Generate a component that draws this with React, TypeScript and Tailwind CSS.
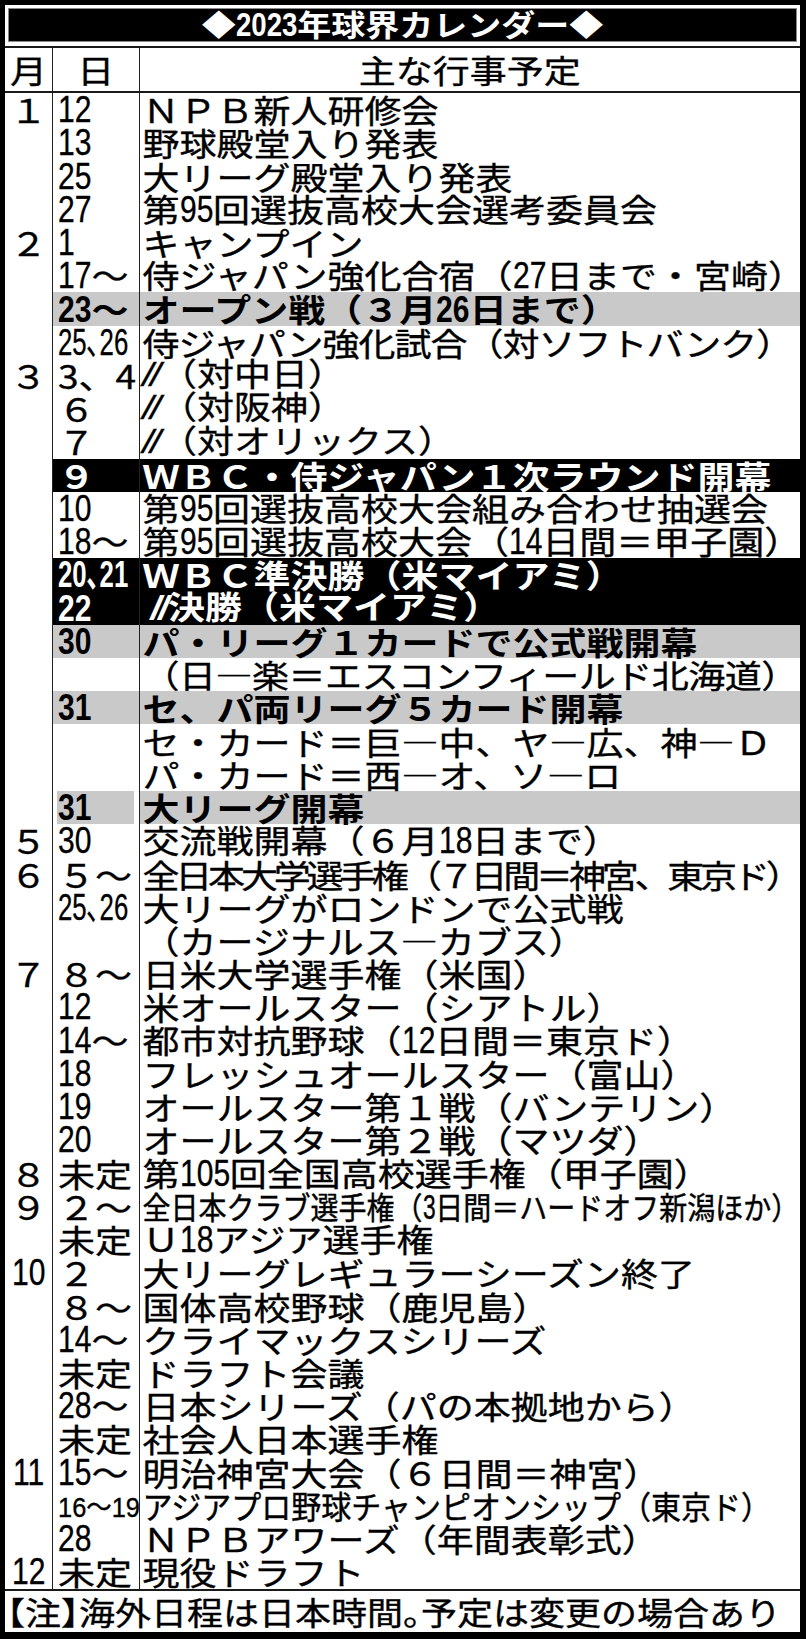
import React from "react";

const MR: Record<number, string> = {
  1: "mr-[-0.167em]",
  2: "mr-[-0.334em]",
  3: "mr-[-0.5em]",
  4: "mr-[-0.667em]",
};

function F({ s }: { s: string }) {
  const parts = s.split(/(\d+)/);
  return (
    <>
      {parts.map((p, i) =>
        /^\d+$/.test(p) ? (
          <span
            key={i}
            className={
              "inline-block font-['Liberation_Sans'] text-[1.16em] leading-none origin-left [transform:scaleX(0.7)] " +
              MR[p.length]
            }
          >
            {p}
          </span>
        ) : p ? (
          <span key={i}>{p}</span>
        ) : null
      )}
    </>
  );
}

const Ditto = () => (
  <span className="inline-block font-['Liberation_Sans'] italic tracking-[-3px] mr-[2px] text-[1.05em] leading-none">//</span>
);

type Row = {
  m?: React.ReactNode;
  d?: React.ReactNode;
  c: React.ReactNode;
  bg?: "gray" | "black";
  inset?: boolean;
  cc?: string;
};

const smallPair = (s: string) => (
  <span className="inline-block font-['Liberation_Sans','Noto_Sans_CJK_JP'] text-[43px] leading-none origin-left [transform:scaleX(0.6)]">
    {s}
  </span>
);

const rows: Row[] = [
  { m: "１", d: <F s="12" />, c: "ＮＰＢ新人研修会" },
  { d: <F s="13" />, c: "野球殿堂入り発表" },
  { d: <F s="25" />, c: "大リーグ殿堂入り発表" },
  { d: <F s="27" />, c: <F s="第95回選抜高校大会選考委員会" /> },
  { m: "２", d: <F s="1" />, c: "キャンプイン" },
  { d: <F s="17～" />, c: <F s="侍ジャパン強化合宿（27日まで・宮崎）" /> },
  { d: <F s="23～" />, c: <F s="オープン戦（３月26日まで）" />, bg: "gray" },
  { d: smallPair("25､26"), c: "侍ジャパン強化試合（対ソフトバンク）", cc: "tracking-[-1px] [transform:scaleY(0.87)]" },
  { m: "３", d: "3、4", c: <><Ditto />（対中日）</> },
  { d: "６", c: <><Ditto />（対阪神）</> },
  { d: "７", c: <><Ditto />（対オリックス）</> },
  { d: "９", c: "ＷＢＣ・侍ジャパン１次ラウンド開幕", bg: "black" },
  { d: <F s="10" />, c: <F s="第95回選抜高校大会組み合わせ抽選会" /> },
  { d: <F s="18～" />, c: <F s="第95回選抜高校大会（14日間＝甲子園）" /> },
  { d: smallPair("20､21"), c: "ＷＢＣ準決勝（米マイアミ）", bg: "black" },
  { d: <F s="22" />, c: <><span className="inline-block w-[8px]" /><Ditto />決勝（米マイアミ）</>, bg: "black" },
  { d: <F s="30" />, c: "パ・リーグ１カードで公式戦開幕", bg: "gray" },
  { c: "（日―楽＝エスコンフィールド北海道）", cc: "tracking-[-0.5px] [transform:scaleY(0.87)]" },
  { d: <F s="31" />, c: "セ、パ両リーグ５カード開幕", bg: "gray" },
  { c: "セ・カード＝巨―中、ヤ―広、神―Ｄ" },
  { c: "パ・カード＝西―オ、ソ―ロ" },
  { d: <F s="31" />, c: "大リーグ開幕", bg: "gray", inset: true },
  { m: "５", d: <F s="30" />, c: <F s="交流戦開幕（６月18日まで）" /> },
  { m: "６", d: "５～", c: "全日本大学選手権（７日間＝神宮、東京ド）", cc: "tracking-[-4.2px] [transform:scaleY(0.87)]" },
  { d: smallPair("25､26"), c: "大リーグがロンドンで公式戦" },
  { c: "（カージナルス―カブス）" },
  { m: "７", d: "８～", c: "日米大学選手権（米国）" },
  { d: <F s="12" />, c: "米オールスター（シアトル）" },
  { d: <F s="14～" />, c: <F s="都市対抗野球（12日間＝東京ド）" /> },
  { d: <F s="18" />, c: "フレッシュオールスター（富山）" },
  { d: <F s="19" />, c: "オールスター第１戦（バンテリン）" },
  { d: <F s="20" />, c: "オールスター第２戦（マツダ）" },
  { m: "８", d: "未定", c: <F s="第105回全国高校選手権（甲子園）" /> },
  { m: "９", d: "２～", c: <F s="全日本クラブ選手権（3日間＝ハードオフ新潟ほか）" />, cc: "text-[28px] [transform:scaleY(1.1)]" },
  { d: "未定", c: <F s="Ｕ18アジア選手権" /> },
  { m: <F s="10" />, d: "２", c: "大リーグレギュラーシーズン終了" },
  { d: "８～", c: "国体高校野球（鹿児島）" },
  { d: <F s="14～" />, c: "クライマックスシリーズ" },
  { d: "未定", c: "ドラフト会議" },
  { d: <F s="28～" />, c: "日本シリーズ（パの本拠地から）" },
  { d: "未定", c: "社会人日本選手権" },
  { m: <F s="11" />, d: <F s="15～" />, c: "明治神宮大会（６日間＝神宮）" },
  {
    d: (
      <span className="inline-block font-['Liberation_Sans','Noto_Sans_CJK_JP'] text-[31px] leading-none origin-left [transform:scaleX(0.82)]">
        16～19
      </span>
    ),
    c: "アジアプロ野球チャンピオンシップ（東京ド）",
    cc: "text-[30px] [transform:scaleY(1.06)]",
  },
  { d: <F s="28" />, c: "ＮＰＢアワーズ（年間表彰式）" },
  { m: <F s="12" />, d: "未定", c: "現役ドラフト" },
];

function DataRow({ r }: { r: Row }) {
  const isGray = r.bg === "gray";
  const isBlack = r.bg === "black";
  const bgCls = isGray ? "bg-[#c9c9c9]" : isBlack ? "bg-black text-white" : "";
  const weight = isGray || isBlack ? "font-bold [-webkit-text-stroke-width:0px]" : "";
  return (
    <div className={"flex h-[33.244px] " + weight}>
      <div className="w-[48px] shrink-0 border-r-[1.5px] border-[#222] flex items-center justify-center font-normal [-webkit-text-stroke-width:0.4px]">
        <div className="[transform:scaleY(0.87)] leading-[33px] whitespace-nowrap">{r.m}</div>
      </div>
      {r.inset ? (
        <div className="w-[86.5px] shrink-0 border-r-[1.5px] border-[#222] flex">
          <div className="ml-[4px] mr-[5px] flex-1 bg-[#c9c9c9] flex items-center pl-[1px]">
            <div className="[transform:scaleY(0.87)] leading-[33px] whitespace-nowrap">{r.d}</div>
          </div>
        </div>
      ) : (
        <div className={"w-[86.5px] shrink-0 border-r-[1.5px] border-[#222] flex items-center pl-[5px] " + bgCls}>
          <div className="[transform:scaleY(0.87)] leading-[33px] whitespace-nowrap">{r.d}</div>
        </div>
      )}
      <div className={"flex-1 min-w-0 flex items-center pl-[3px] " + bgCls}>
        <div className={"leading-[33px] whitespace-nowrap " + (r.cc ? r.cc : "[transform:scaleY(0.87)]")}>{r.c}</div>
      </div>
    </div>
  );
}

export default function App() {
  return (
    <div className="w-[806px] h-[1639px] overflow-hidden bg-black pt-[5px] pl-[5px] pr-[6px] pb-[7px] font-['Noto_Sans_CJK_JP',sans-serif] text-black text-[37px] [-webkit-text-stroke-width:0.4px]">
      <div className="bg-white h-full flex flex-col">
        <div className="mx-[3px] mt-[3px] h-[34px] shrink-0 border border-[#8a8a8a] bg-black text-white flex items-center justify-center text-[34px] font-bold [-webkit-text-stroke-width:0px]">
          <div className="[transform:scaleY(0.86)] leading-[32px] whitespace-nowrap">
            ◆<F s="2023" />年球界カレンダー◆
          </div>
        </div>
        <div className="h-[4px] shrink-0" />
        <div className="flex h-[47px] shrink-0 border-t-2 border-b-2 border-[#1a1a1a]">
          <div className="w-[48px] shrink-0 border-r-[1.5px] border-[#222] flex items-center justify-center">
            <div className="[transform:scaleY(0.87)] leading-[33px]">月</div>
          </div>
          <div className="w-[86.5px] shrink-0 border-r-[1.5px] border-[#222] flex items-center justify-center">
            <div className="[transform:scaleY(0.87)] leading-[33px]">日</div>
          </div>
          <div className="flex-1 flex items-center justify-center">
            <div className="[transform:scaleY(0.87)] leading-[33px]">主な行事予定</div>
          </div>
        </div>
        <div className="flex flex-col shrink-0">
          {rows.map((r, i) => (
            <DataRow key={i} r={r} />
          ))}
        </div>
        <div className="flex-1 border-t-2 border-[#1a1a1a] flex items-center pl-[2px] text-[36px]">
          <div className="[transform:scaleY(0.88)] leading-[38px] whitespace-nowrap [font-feature-settings:'halt']">
            【注】海外日程は日本時間。予定は変更の場合あり
          </div>
        </div>
      </div>
    </div>
  );
}
